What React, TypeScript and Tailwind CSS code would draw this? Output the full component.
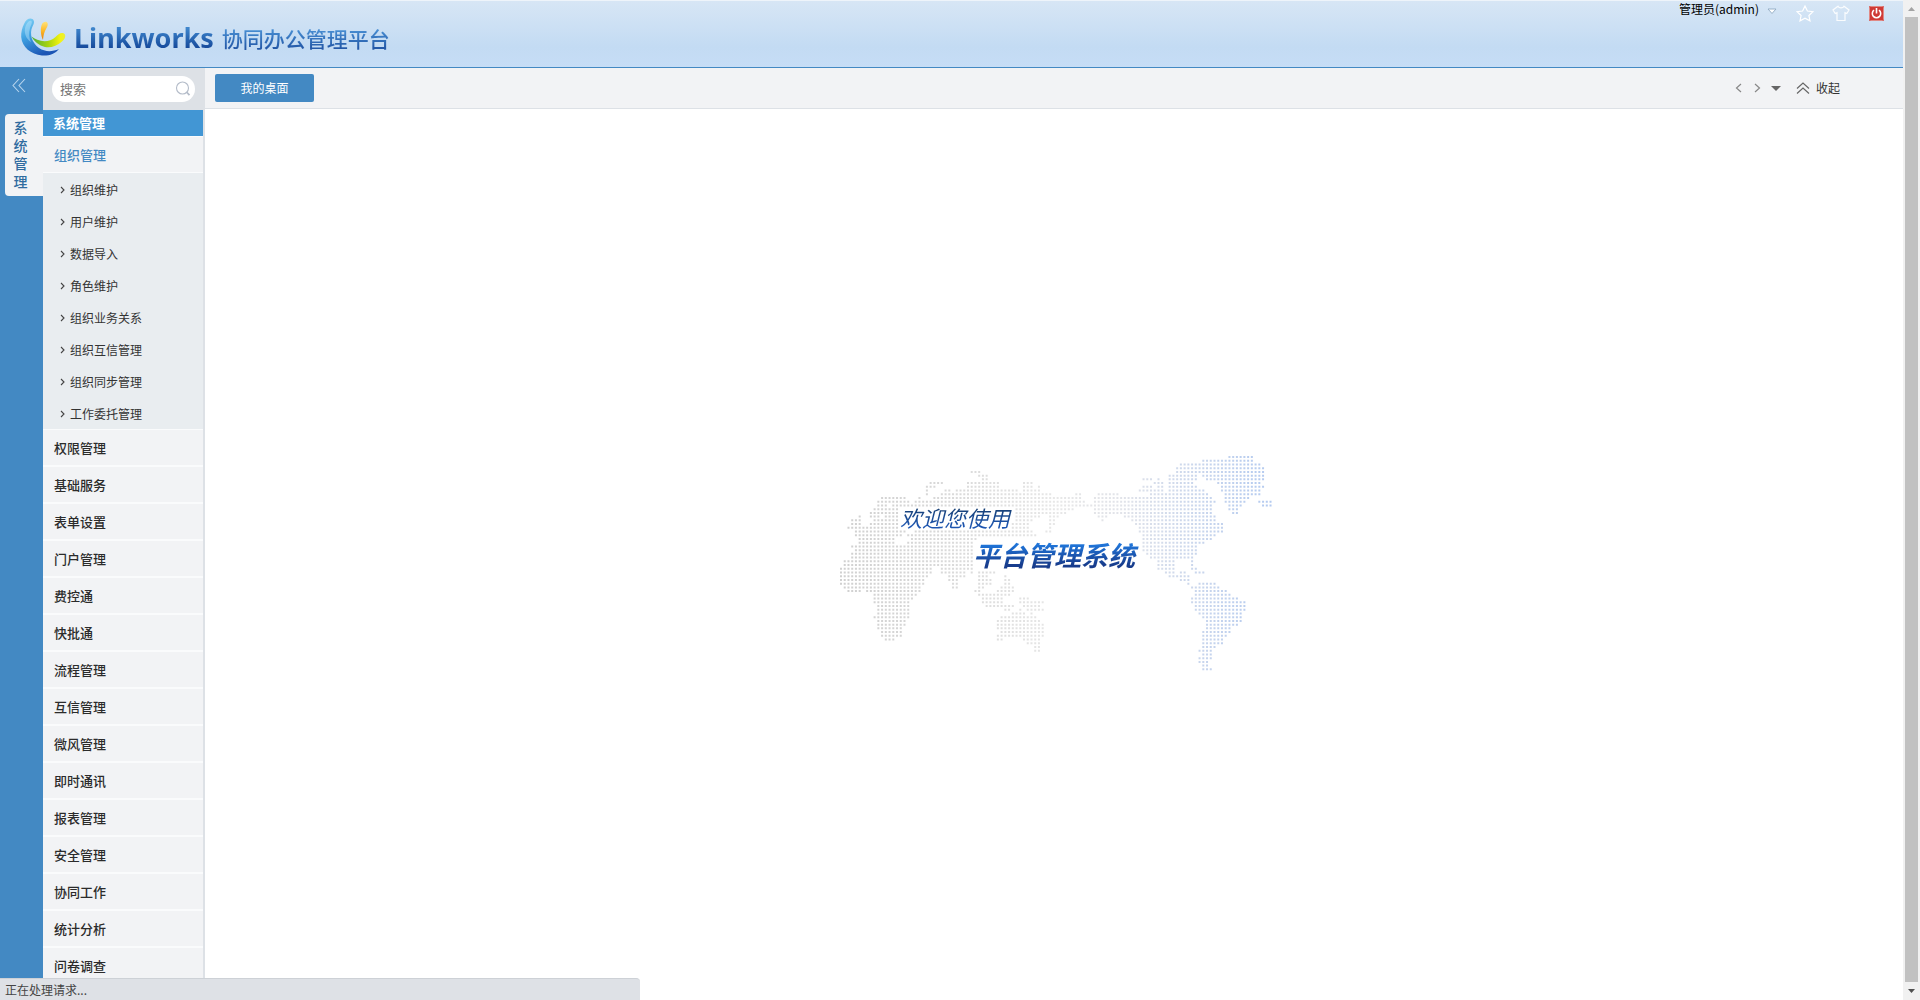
import React from "react";

const SUB_ITEMS = [
  "组织维护",
  "用户维护",
  "数据导入",
  "角色维护",
  "组织业务关系",
  "组织互信管理",
  "组织同步管理",
  "工作委托管理",
];

const CATEGORIES = [
  "权限管理",
  "基础服务",
  "表单设置",
  "门户管理",
  "费控通",
  "快批通",
  "流程管理",
  "互信管理",
  "微风管理",
  "即时通讯",
  "报表管理",
  "安全管理",
  "协同工作",
  "统计分析",
  "问卷调查",
];

// Dotted world map: one entry per row, each a list of column spans.
const MAP_ROWS = [
  "104-110",
  "97-110",
  "91-112",
  "90-113",
  "35-37 90-113",
  "37-39 88-95 97-113",
  "38-39 81-83 85-85 88-95 98-100 101-113",
  "24-27 34-42 49-51 84-86 88-94 101-112",
  "23-25 34-42 49-51 53-53 81-83 85-86 88-95 102-113",
  "23-23 28-29 31-47 49-53 80-86 88-97 102-112",
  "23-23 27-56 63-64 69-74 83-98 103-112",
  "11-17 21-21 25-64 68-99 103-109",
  "10-18 20-65 68-100 103-108 112-115",
  "10-12 14-18 19-99 104-107 113-115",
  "9-15 47-62 68-99 104-106",
  "8-15 47-60 68-99 105-106",
  "5-5 8-10 12-15 47-53 56-58 69-71 76-100",
  "3-5 9-15 47-51 56-57 70-70 78-100",
  "3-5 8-15 46-50 56-57 79-102",
  "2-15 46-50 56-56 80-102",
  "4-17 20-51 55-56 80-102",
  "4-16 18-52 81-100",
  "5-14 19-36 81-99",
  "5-14 18-35 81-97",
  "3-35 81-95",
  "4-35 81-95",
  "3-35 82-95",
  "3-35 83-94",
  "1-35 85-89 94-94",
  "1-35 85-89 94-94",
  "0-24 27-35 85-89 94-95",
  "0-24 27-33 35-35 37-41 87-89 91-92 95-97",
  "0-23 29-33 37-39 44-44 88-93",
  "0-22 29-31 37-40 44-45 91-93",
  "0-22 30-31 37-40 44-45 93-93 96-100",
  "1-21 30-31 37-38 43-46 94-101",
  "2-5 7-21 36-37 42-46 95-103",
  "9-20 37-39 40-45 95-104",
  "9-19 38-43 48-50 94-106",
  "9-18 38-43 48-54 94-108",
  "10-18 39-46 49-53 95-108",
  "10-18 44-45 48-48 50-54 95-108",
  "10-18 46-49 51-51 96-107",
  "9-18 43-52 97-107",
  "10-17 42-53 98-107",
  "10-17 42-54 98-106",
  "10-16 42-54 98-104",
  "11-16 43-54 97-104",
  "11-16 42-54 97-103",
  "12-14 42-43 49-53 97-102",
  "50-53 97-102",
  "52-53 97-100",
  "52-53 96-99",
  "97-99",
  "96-99",
  "96-98",
  "97-98",
  "97-99",
];

const MAP_PATH = MAP_ROWS.map((row, r) =>
  row
    .split(" ")
    .map((span) => {
      const [from, to] = span.split("-").map(Number);
      let d = "";
      for (let c = from; c <= to; c++) {
        d += `M${(c * 3.735).toFixed(2)} ${(r * 3.725).toFixed(2)}h2v2h-2z`;
      }
      return d;
    })
    .join("")
).join("");

function WorldMap() {
  return (
    <svg width="432" height="216" viewBox="0 0 432 216" aria-hidden="true">
      <defs>
        <linearGradient id="mapTone" gradientUnits="userSpaceOnUse" x1="0" y1="0" x2="432" y2="0">
          <stop offset="0" stopColor="#d0d0d0" />
          <stop offset="0.25" stopColor="#d9d9d9" />
          <stop offset="0.5" stopColor="#e7e7e7" />
          <stop offset="0.65" stopColor="#e1e3e9" />
          <stop offset="0.8" stopColor="#cdd8ec" />
          <stop offset="1" stopColor="#b3caf0" />
        </linearGradient>
      </defs>
      <path d={MAP_PATH} fill="url(#mapTone)" />
    </svg>
  );
}

function LogoMark() {
  return (
    <svg width="48" height="42" viewBox="0 0 48 42" aria-hidden="true">
      <defs>
        <linearGradient id="lgBlue" x1="0" y1="0" x2="0.5" y2="1">
          <stop offset="0" stopColor="#8ad6f7" />
          <stop offset="0.45" stopColor="#3fa2e2" />
          <stop offset="1" stopColor="#1b55b5" />
        </linearGradient>
        <linearGradient id="lgGreen" x1="0" y1="0" x2="1" y2="0">
          <stop offset="0" stopColor="#4fae3e" />
          <stop offset="0.5" stopColor="#a8d40f" />
          <stop offset="0.85" stopColor="#f4f312" />
          <stop offset="1" stopColor="#e8ee3c" />
        </linearGradient>
        <linearGradient id="lgOrange" x1="0" y1="0" x2="0" y2="1">
          <stop offset="0" stopColor="#ffe27a" />
          <stop offset="0.5" stopColor="#fdb827" />
          <stop offset="1" stopColor="#e07c10" />
        </linearGradient>
      </defs>
      <path d="M5 7C7 2 11 .5 13.500 2C16 4 15 7 13.500 9.500C10 17 13 26 20 31C26 35 33 35 40 32C36 37 30 39 23 38.500C12 37.500 3 30 2.200 20C2 15 3 11 5 7Z" fill="url(#lgBlue)" />
      <path d="M7 8C9 4 11 3 12.500 4C13.500 5.500 12 8 11 11C9.500 16 10 21 12 25C7 22 4 15 7 8Z" fill="#cdeeff" opacity="0.4" />
      <path d="M12.500 19.500C18 24 29 27 36.500 20C39 17.500 42 15 45 16.500C47.500 18.500 46 22 43 24.500C38 29 32 31 26 30C20 28.500 15 24.500 12.500 19.500Z" fill="url(#lgGreen)" />
      <path d="M24 23C21.500 18 21.300 11 22.800 7.500C24 4.500 27.500 3.800 28.500 6C29.500 8.500 27.500 11 26 14C24.700 17 24.300 20 24 23Z" fill="url(#lgOrange)" />
    </svg>
  );
}

function Header() {
  return (
    <header className="flex h-[68px] shrink-0 items-start justify-between border-t border-b border-t-[#eef4fa] border-b-[#4389c3] bg-linear-to-b from-[#d7e6f5] via-[#c3dbf3] via-70% to-[#c6ddf6]">
      <div className="flex items-center pt-4 pl-[19px]">
        <LogoMark />
        <h1 className="flex items-center pl-[7px] leading-10">
          <span className="bg-linear-to-b from-[#3f86cc] from-25% to-[#164a9c] to-75% bg-clip-text font-['Noto_Sans','Open_Sans',sans-serif] text-[27px] font-bold text-transparent">
            Linkworks
          </span>
          <span className="bg-linear-to-b from-[#4c93d6] from-25% to-[#2459a8] to-75% bg-clip-text pl-2 text-[21px] font-medium text-transparent">
            协同办公管理平台
          </span>
        </h1>
      </div>
      <div className="flex items-start pr-[19px]">
        <button className="flex items-center gap-2 text-xs leading-4 text-black">
          管理员(admin)
          <svg className="mt-1" width="10" height="7" viewBox="0 0 10 7">
            <path d="M1 1h8L5 5.500z" fill="#fff" stroke="#8fa9c2" strokeWidth="0.900" />
          </svg>
        </button>
        <button aria-label="收藏" className="mt-1 ml-[19px]">
          <svg width="18" height="17" viewBox="0 0 18 17" fill="none" stroke="#fff" strokeWidth="1.200">
            <path d="M9 1l2.400 5 5.600.7-4.100 3.800 1.100 5.400L9 13.200 4 15.900l1.100-5.400L1 6.700 6.600 6z" />
          </svg>
        </button>
        <button aria-label="皮肤" className="mt-1 ml-[18px]">
          <svg width="18" height="17" viewBox="0 0 18 17" fill="none" stroke="#fff" strokeWidth="1.200" opacity="0.9">
            <path d="M6 1.200L1 5l2.200 3.500L5 7.600V15.500h8V7.600l1.800.9L17 5l-5-3.800C11 3.500 7 3.500 6 1.200z" />
          </svg>
        </button>
        <button aria-label="退出" className="mt-[5px] ml-[19px]">
          <svg width="15" height="15" viewBox="0 0 15 15" fill="none">
            <rect width="15" height="15" rx="1" fill="#cf3a36" />
            <rect x="0.500" y="0.500" width="14" height="14" rx="1" stroke="#e08a86" />
            <path d="M5 4.200a4.200 4.200 0 1 0 5 0" stroke="#fff" strokeWidth="1.600" />
            <path d="M7.500 2v5.500" stroke="#fff" strokeWidth="1.600" />
          </svg>
        </button>
      </div>
    </header>
  );
}

function Rail() {
  return (
    <nav aria-label="模块" className="flex w-[43px] shrink-0 flex-col bg-[#4389c3]">
      <button aria-label="折叠" className="flex h-[46px] items-start pt-[10px] pl-3">
        <svg width="14" height="15" viewBox="0 0 14 15" fill="none" stroke="#b9d6ee" strokeWidth="1.100">
          <path d="M7 1L1 7.500 7 14M13 1L7 7.500 13 14" />
        </svg>
      </button>
      <button className="ml-[5px] flex flex-col items-center rounded-l-[4px] bg-[#f2f3f5] pt-1 pr-[7px] pb-[6px] text-sm leading-[18px] font-medium text-[#2f6b9f]">
        {"系统管理".split("").map((ch) => (
          <span key={ch}>{ch}</span>
        ))}
      </button>
    </nav>
  );
}

function Sidebar() {
  return (
    <aside className="flex w-[162px] shrink-0 flex-col overflow-hidden border-r-2 border-[#dde1e6] bg-[#f2f3f5]">
      <div className="h-[42px] shrink-0 bg-[#dde1e6] px-2 pt-2">
        <label className="ml-px flex h-[26px] items-center rounded-full bg-white pr-1 pl-2">
          <input
            type="text"
            placeholder="搜索"
            aria-label="搜索"
            className="min-w-0 flex-1 bg-transparent text-[13px] leading-5 outline-none placeholder:text-[#757575]"
          />
          <svg width="16" height="16" viewBox="0 0 16 16" fill="none" stroke="#b4bcc9">
            <circle cx="7.500" cy="7" r="6" strokeWidth="1.100" />
            <path d="M11.500 11l3 3.200" strokeWidth="1.800" />
          </svg>
        </label>
      </div>
      <h2 className="h-[26px] shrink-0 bg-[#4296d4] pl-[10px] text-[13px] leading-[26px] font-bold text-white">系统管理</h2>
      <button className="h-[37px] shrink-0 border-y border-[#fafbfc] pl-[11px] text-left text-[13px] font-medium text-[#4389c3]">
        组织管理
      </button>
      <ul className="shrink-0 bg-[#e9edf0]">
        {SUB_ITEMS.map((name) => (
          <li key={name}>
            <a href="#" className="flex h-8 items-center gap-[5px] pt-px pl-[17px] text-xs text-[#333]">
              <svg width="5" height="8" viewBox="0 0 5 8" fill="none" stroke="#444" strokeWidth="1.100">
                <path d="M1 1l3 3-3 3" />
              </svg>
              {name}
            </a>
          </li>
        ))}
      </ul>
      {CATEGORIES.map((name) => (
        <button
          key={name}
          className="h-[37px] shrink-0 border-y border-[#fafbfc] pt-px pl-[11px] text-left text-[13px] font-medium text-[#2b2b2b]"
        >
          {name}
        </button>
      ))}
    </aside>
  );
}

function TabBar() {
  return (
    <div className="flex h-[41px] shrink-0 items-center justify-between border-b border-[#dde1e6] bg-[#f2f3f5] pr-[63px] pl-[10px]">
      <button className="h-7 w-[99px] rounded-[2px] bg-[#4389c3] text-xs text-white">我的桌面</button>
      <div className="flex items-center text-xs text-[#333]">
        <button aria-label="上一个">
          <svg width="7" height="10" viewBox="0 0 7 10" fill="none" stroke="#888" strokeWidth="1.200">
            <path d="M6 1L1.500 5 6 9" />
          </svg>
        </button>
        <button aria-label="下一个" className="ml-3">
          <svg width="7" height="10" viewBox="0 0 7 10" fill="none" stroke="#888" strokeWidth="1.200">
            <path d="M1 1l4.500 4L1 9" />
          </svg>
        </button>
        <button aria-label="更多" className="ml-[10px]">
          <svg width="10" height="5" viewBox="0 0 10 5">
            <path d="M0 0h10L5 5z" fill="#666" />
          </svg>
        </button>
        <button className="ml-[15px] flex items-center gap-[6px]">
          <svg width="14" height="12" viewBox="0 0 14 12" fill="none" stroke="#666" strokeWidth="1.200">
            <path d="M1 6.500l6-5.500 6 5.500M1 11.500l6-5.500 6 5.500" />
          </svg>
          收起
        </button>
      </div>
    </div>
  );
}

function Welcome() {
  return (
    <main className="flex flex-1 items-center justify-center bg-white pt-[18px] pl-1">
      <div className="relative">
        <WorldMap />
        <p className="absolute top-[43px] left-[56px] bg-linear-to-b from-[#173f73] from-25% to-[#1d55b0] to-75% bg-clip-text px-1 text-[22px] leading-9 whitespace-nowrap text-transparent italic">
          欢迎您使用
        </p>
        <p className="absolute top-[79px] left-[129px] bg-linear-to-b from-[#1f74d8] from-25% to-[#173c8c] to-75% bg-clip-text px-1 text-[27px] leading-10 font-bold whitespace-nowrap text-transparent italic">
          平台管理系统
        </p>
      </div>
    </main>
  );
}

function ScrollTrack() {
  return (
    <div aria-hidden="true" className="flex w-[17px] shrink-0 flex-col items-center bg-[#f1f1f1]">
      <div className="flex h-[17px] items-center">
        <svg width="7" height="4" viewBox="0 0 7 4">
          <path d="M0 4h7L3.500 0z" fill="#a3a3a3" />
        </svg>
      </div>
      <div className="w-[13px] flex-1 bg-[#c1c1c1]" />
      <div className="flex h-[18px] items-center">
        <svg width="7" height="4" viewBox="0 0 7 4">
          <path d="M0 0h7L3.500 4z" fill="#505050" />
        </svg>
      </div>
    </div>
  );
}

export default function App() {
  return (
    <div className="relative flex h-screen overflow-hidden font-['Noto_Sans_CJK_SC',sans-serif]">
      <div className="flex min-w-0 flex-1 flex-col">
        <Header />
        <div className="flex min-h-0 flex-1">
          <Rail />
          <Sidebar />
          <div className="flex min-w-0 flex-1 flex-col">
            <TabBar />
            <Welcome />
          </div>
        </div>
      </div>
      <ScrollTrack />
      <div role="status" className="absolute bottom-0 left-0 w-1/3 rounded-tr-[4px] border-t border-[#cdd1d6] bg-[#dee1e6] pl-[5px] text-xs leading-[21px] text-[#444]">
        正在处理请求...
      </div>
    </div>
  );
}
